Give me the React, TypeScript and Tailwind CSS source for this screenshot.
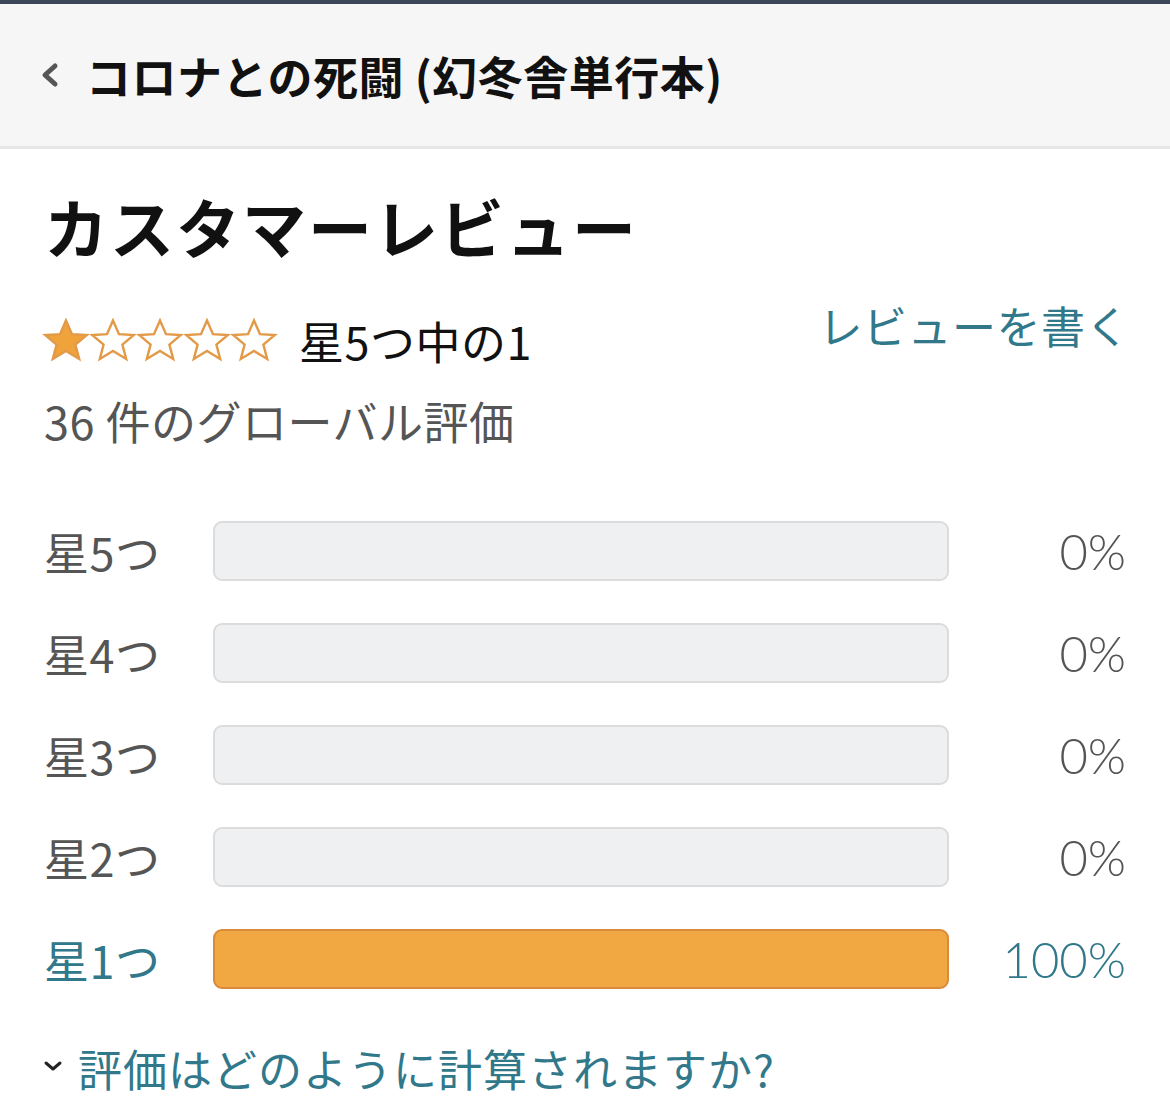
import React from "react";

const teal = "text-[#31788a]";

function Star({ filled }: { filled: boolean }) {
  return (
    <svg width="48" height="44" viewBox="0 0 24 22" className="-mx-[0.5px]">
      <path
        d="M12 1.2 L15 8.1 L22.4 8.5 L16.7 13.3 L18.6 20.5 L12 16.5 L5.4 20.5 L7.3 13.3 L1.6 8.5 L9 8.1 Z"
        fill={filled ? "#f0a33a" : "#ffffff"}
        stroke="#e39a48"
        strokeWidth="1.2"
        strokeLinejoin="miter"
      />
    </svg>
  );
}

const rows = [
  { label: "星5つ", pct: 0 },
  { label: "星4つ", pct: 0 },
  { label: "星3つ", pct: 0 },
  { label: "星2つ", pct: 0 },
  { label: "星1つ", pct: 100 },
];

export default function App() {
  return (
    <div
      className="w-[1170px] h-[1101px] bg-white overflow-hidden"
      style={{ fontFamily: '"Noto Sans CJK JP", "Noto Sans", sans-serif' }}
    >
      <div className="h-[4px] bg-[#3c4659]" />
      <div className="h-[142px] bg-[#f6f6f6] flex items-center pl-[38px]">
        <svg width="26" height="30" viewBox="0 0 26 30" className="mr-[22px]">
          <path d="M17 6 L7 15 L17 24" fill="none" stroke="#555" strokeWidth="5" strokeLinecap="round" strokeLinejoin="round" />
        </svg>
        <div className="text-[45px] font-bold text-[#111] tracking-[0.5px] leading-none">
          コロナとの死闘 (幻冬舎単行本)
        </div>
      </div>
      <div className="h-[3px] bg-[#e6e6e6]" />

      <div className="px-[44px]">
        <div className="mt-[36px] h-[80px] flex items-center text-[64px] font-bold text-[#111] leading-none tracking-[2px]">
          カスタマーレビュー
        </div>

        <div className="mt-[35px] h-[80px] flex items-start justify-between">
          <div className="flex items-center h-[80px]">
            <div className="flex items-center -ml-[2px]">
              <Star filled />
              <Star filled={false} />
              <Star filled={false} />
              <Star filled={false} />
              <Star filled={false} />
            </div>
            <span className="ml-[22px] text-[45px] text-[#111] leading-none tracking-[0.5px]">星5つ中の1</span>
          </div>
          <div className={`h-[50px] flex items-center text-[44px] ${teal} leading-none -mr-[4px] tracking-[0.5px]`}>
            レビューを書く
          </div>
        </div>

        <div className="mt-[15px] h-[50px] flex items-center text-[45px] text-[#555] leading-none tracking-[0.5px]">
          36 件のグローバル評価
        </div>

        <div className="mt-[77px] flex flex-col gap-[44px]">
          {rows.map((r) => {
            const active = r.pct > 0;
            return (
              <div key={r.label} className="flex items-center h-[58px]">
                <div
                  className={`w-[169px] text-[45px] leading-none tracking-[0.5px] ${
                    active ? "text-[#31788a]" : "text-[#555]"
                  }`}
                >
                  {r.label}
                </div>
                <div
                  className={`w-[736px] h-[60px] rounded-[9px] border-[2px] ${
                    active ? "border-[#d98a3b] bg-[#f1a843]" : "border-[#dcdcdc] bg-[#eff0f2]"
                  }`}
                />
                <div
                  className={`flex-1 text-right text-[49px] leading-none ${
                    active ? "text-[#31788a]" : "text-[#555]"
                  }`}
                  style={{ fontFamily: '"Lato", "Noto Sans", sans-serif', fontWeight: 300 }}
                >
                  {r.pct}%
                </div>
              </div>
            );
          })}
        </div>

        <div className="mt-[52px] flex items-center h-[56px]">
          <svg width="22" height="16" viewBox="0 0 22 16" className="-ml-[2px] mr-[14px] -mt-[4px]">
            <path d="M4 5 L11 11 L18 5" fill="none" stroke="#222" strokeWidth="3" strokeLinecap="round" strokeLinejoin="round" />
          </svg>
          <span className={`text-[44px] ${teal} leading-none tracking-[1px]`}>評価はどのように計算されますか?</span>
        </div>
      </div>
    </div>
  );
}
